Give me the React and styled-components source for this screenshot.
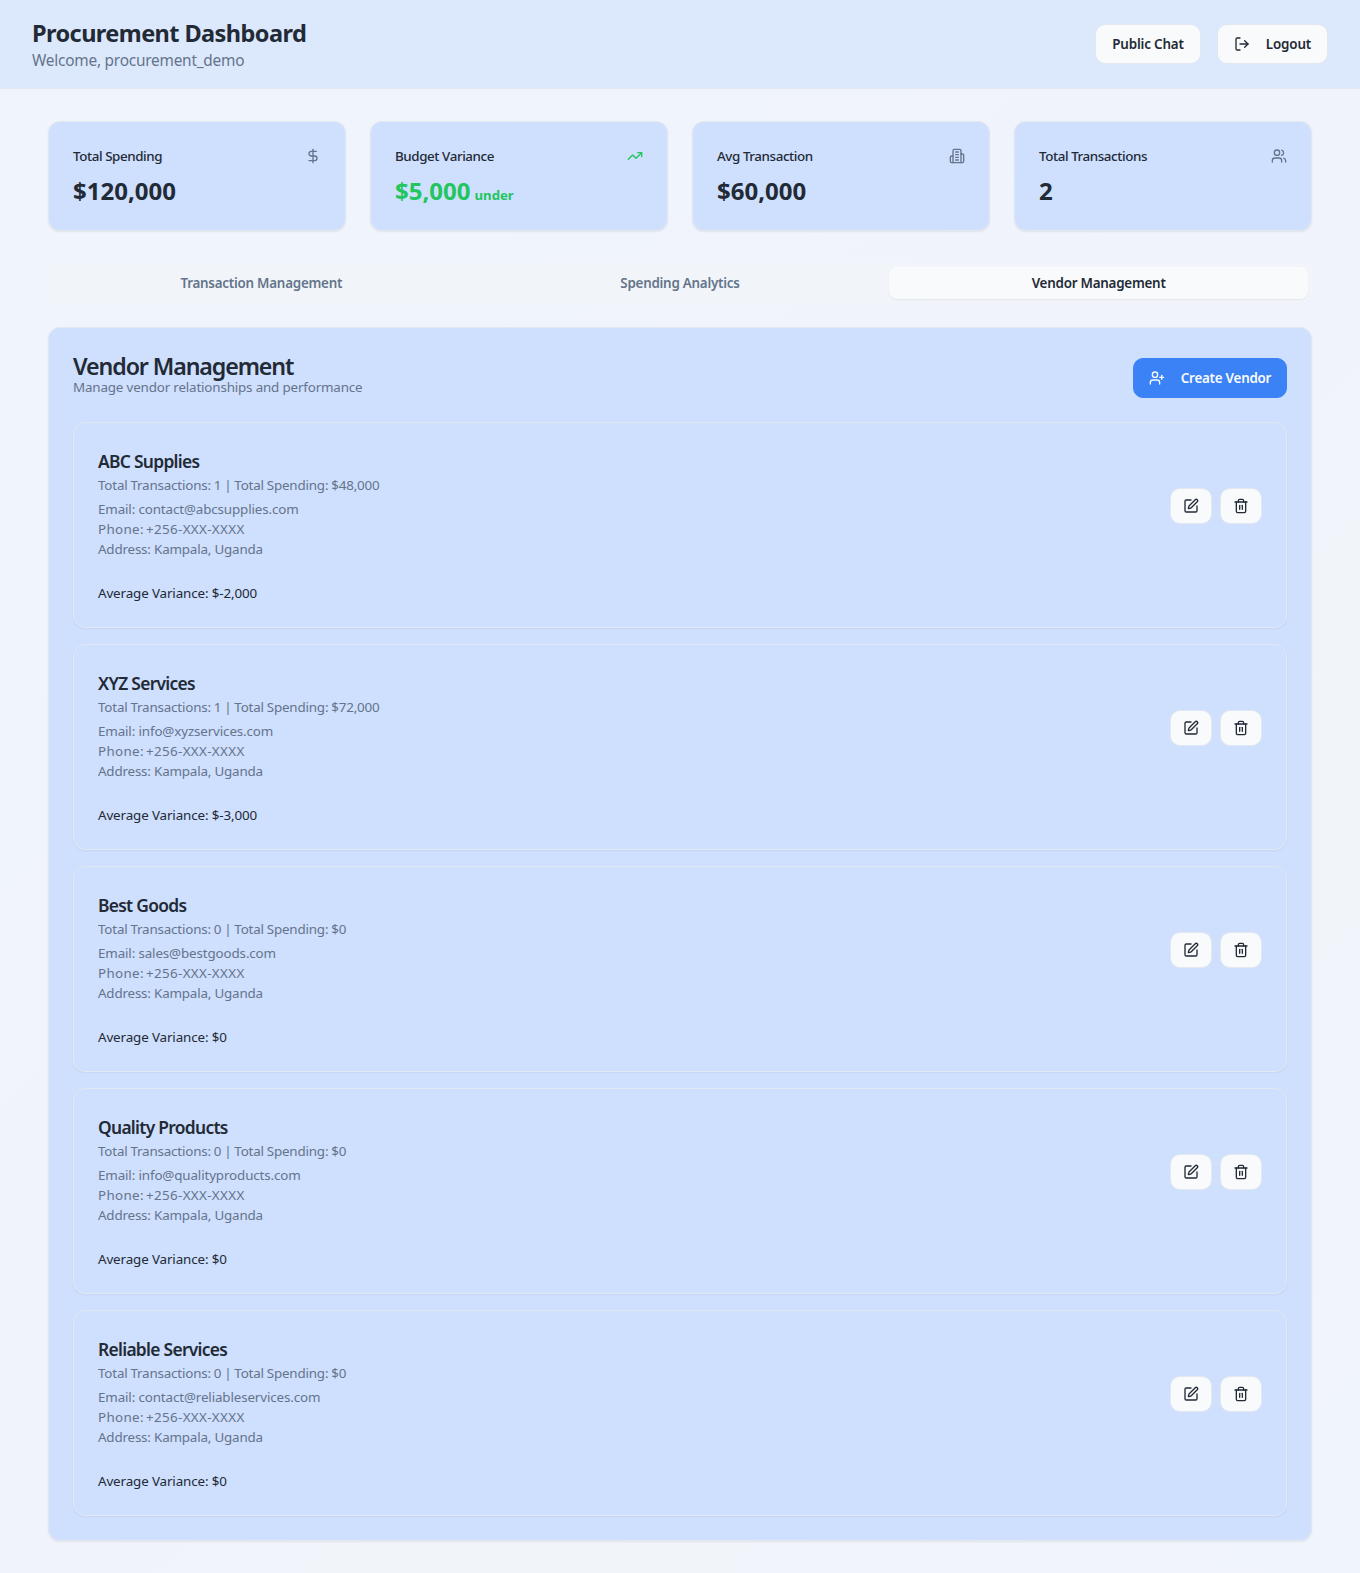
import React from "react";
import styled, { createGlobalStyle } from "styled-components";
import { DollarSign, TrendingUp, Users, UserPlus, LogOut, SquarePen, Trash2 } from "lucide-react";

const color = {
  text: "#222a35",
  muted: "#64748b",
  card: "#cfdffe",
  border: "#e2e8f0",
  surface: "#f9fafc",
  green: "#22c55e",
  primary: "#3b82f6",
};

const GlobalStyle = createGlobalStyle`
  *, *::before, *::after { box-sizing: border-box; }
  body { margin: 0; }
  h1, h2, h3, p { margin: 0; }
  button { font: inherit; margin: 0; cursor: pointer; }
`;

const Page = styled.div`
  min-height: 1573px;
  font-family: "Noto Sans", "Open Sans", sans-serif;
  color: ${color.text};
  background: linear-gradient(135deg, #f0f5fc 0%, #f0f3fc 50%, #f1f4f9 68%, #f0f4fc 100%);
`;

const Header = styled.header`
  display: flex;
  align-items: center;
  justify-content: space-between;
  height: 89px;
  padding: 0 32px;
  background: #dce8fc;
  border-bottom: 1px solid ${color.border};
`;

const Greeting = styled.div`
  padding-top: 2px;
`;

const PageTitle = styled.h1`
  font-size: 23.5px;
  line-height: 32px;
  font-weight: 700;
  letter-spacing: -0.57px;
`;

const Welcome = styled.p`
  font-size: 15.4px;
  line-height: 24px;
  letter-spacing: -0.22px;
  color: ${color.muted};
`;

const HeaderActions = styled.div`
  display: flex;
  gap: 16px;
`;

const Button = styled.button`
  display: inline-flex;
  align-items: center;
  justify-content: center;
  gap: 16px;
  width: ${(p) => p.$width}px;
  height: 40px;
  padding: 0;
  border-radius: 10px;
  border: 1px solid ${(p) => (p.$primary ? color.primary : color.border)};
  background: ${(p) => (p.$primary ? color.primary : color.surface)};
  color: ${(p) => (p.$primary ? "#f8fafc" : color.text)};
  font-size: 13.4px;
  line-height: 20px;
  font-weight: 600;
  letter-spacing: ${(p) => (p.$primary ? -0.24 : -0.15)}px;
  white-space: nowrap;
`;

const Main = styled.main`
  padding: 32px 48px;
`;

const StatGrid = styled.section`
  display: grid;
  grid-template-columns: repeat(4, 1fr);
  gap: 24px;
`;

const StatCard = styled.article`
  height: 110px;
  padding: 24px 24px 0;
  border: 1px solid ${color.border};
  border-radius: 12px;
  background: ${color.card};
  box-shadow: 0 1px 2px rgba(0, 0, 0, 0.07);
`;

const StatHead = styled.div`
  display: flex;
  align-items: center;
  justify-content: space-between;
  padding-bottom: 9px;
  color: ${(p) => (p.$good ? color.green : color.muted)};
`;

const StatLabel = styled.h3`
  font-size: 13.4px;
  line-height: 20px;
  font-weight: 500;
  letter-spacing: -0.42px;
  color: ${color.text};
`;

const StatValue = styled.div`
  font-size: 24px;
  line-height: 32px;
  font-weight: 700;
  color: ${(p) => (p.$good ? color.green : color.text)};
`;

const StatNote = styled.span`
  margin-left: 4px;
  font-size: 13.2px;
  line-height: 20px;
`;

const TabList = styled.nav`
  display: grid;
  grid-template-columns: repeat(3, 1fr);
  margin-top: 32px;
  height: 40px;
  padding: 4px;
  border-radius: 10px;
  background: #f1f5f9;
`;

const Tab = styled.button`
  border: 0;
  padding: 0;
  border-radius: 8px;
  font-size: 13.4px;
  line-height: 20px;
  font-weight: 600;
  letter-spacing: -0.24px;
  color: ${(p) => (p.$active ? color.text : color.muted)};
  background: ${(p) => (p.$active ? color.surface : "transparent")};
  box-shadow: ${(p) => (p.$active ? "0 1px 2px rgba(0, 0, 0, 0.06)" : "none")};
`;

const Panel = styled.section`
  margin-top: 24px;
  padding: 24px;
  border: 1px solid ${color.border};
  border-radius: 12px;
  background: ${color.card};
  box-shadow: 0 1px 2px rgba(0, 0, 0, 0.07);
`;

const PanelHeader = styled.div`
  display: flex;
  align-items: center;
  justify-content: space-between;
  height: 46px;
  margin-bottom: 24px;

  > button {
    margin-top: 6px;
  }
`;

const PanelHeading = styled.div`
  padding: 1px 0;
`;

const PanelTitle = styled.h2`
  font-size: 23.2px;
  line-height: 24px;
  font-weight: 600;
  letter-spacing: -1.1px;
`;

const PanelSubtitle = styled.p`
  font-size: 13.4px;
  line-height: 18px;
  letter-spacing: -0.17px;
  color: ${color.muted};
`;

const VendorList = styled.div`
  display: grid;
  gap: 16px;
`;

const VendorCard = styled.article`
  padding: 24px;
  border: 1px solid ${color.border};
  border-radius: 12px;
  background: ${color.card};
  box-shadow: 0 1px 2px rgba(0, 0, 0, 0.05);
`;

const VendorTop = styled.div`
  display: flex;
  align-items: center;
  justify-content: space-between;
`;

const VendorName = styled.h3`
  font-size: 17.4px;
  line-height: 28px;
  font-weight: 600;
  letter-spacing: -0.7px;
`;

const Summary = styled.p`
  font-size: 13.4px;
  line-height: 20px;
  letter-spacing: -0.18px;
  word-spacing: -0.4px;
  margin-bottom: 4px;
  color: ${color.muted};
`;

const Detail = styled.p`
  font-size: 13.4px;
  line-height: 20px;
  letter-spacing: ${(p) => p.$track}px;
  word-spacing: ${(p) => p.$word || 0}px;
  color: ${color.muted};
`;

const Variance = styled.p`
  margin-top: 24px;
  font-size: 13.4px;
  line-height: 20px;
  letter-spacing: -0.13px;
`;

const VendorActions = styled.div`
  display: flex;
  gap: 8px;
  margin-top: 6px;
`;

const IconButton = styled.button`
  display: flex;
  align-items: center;
  justify-content: center;
  width: 42px;
  height: 36px;
  padding: 0;
  border: 1px solid ${color.border};
  border-radius: 10px;
  background: ${color.surface};
  color: ${color.text};
`;

const Building = ({ size = 16 }) => (
  <svg width={size} height={size} viewBox="0 0 24 24" fill="none" stroke="currentColor" strokeWidth="2" strokeLinecap="round" strokeLinejoin="round">
    <path d="M6 22V4a2 2 0 0 1 2-2h8a2 2 0 0 1 2 2v18Z" />
    <path d="M6 12H4a2 2 0 0 0-2 2v6a2 2 0 0 0 2 2h2" />
    <path d="M18 9h2a2 2 0 0 1 2 2v9a2 2 0 0 1-2 2h-2" />
    <path d="M10 6h4" />
    <path d="M10 10h4" />
    <path d="M10 14h4" />
    <path d="M10 18h4" />
  </svg>
);

const stats = [
  { label: "Total Spending", value: "$120,000", Icon: DollarSign },
  { label: "Budget Variance", value: "$5,000", note: "under", good: true, Icon: TrendingUp },
  { label: "Avg Transaction", value: "$60,000", Icon: Building },
  { label: "Total Transactions", value: "2", Icon: Users },
];

const tabs = ["Transaction Management", "Spending Analytics", "Vendor Management"];

const vendors = [
  { name: "ABC Supplies", count: 1, spending: "48,000", email: "contact@abcsupplies.com", variance: "-2,000" },
  { name: "XYZ Services", count: 1, spending: "72,000", email: "info@xyzservices.com", variance: "-3,000" },
  { name: "Best Goods", count: 0, spending: "0", email: "sales@bestgoods.com", variance: "0" },
  { name: "Quality Products", count: 0, spending: "0", email: "info@qualityproducts.com", variance: "0" },
  { name: "Reliable Services", count: 0, spending: "0", email: "contact@reliableservices.com", variance: "0" },
];

export default function App() {
  return (
    <Page>
      <GlobalStyle />
      <Header>
        <Greeting>
          <PageTitle>Procurement Dashboard</PageTitle>
          <Welcome>Welcome, procurement_demo</Welcome>
        </Greeting>
        <HeaderActions>
          <Button $width={106}>Public Chat</Button>
          <Button $width={111}>
            <LogOut size={16} />
            Logout
          </Button>
        </HeaderActions>
      </Header>
      <Main>
        <StatGrid>
          {stats.map(({ label, value, note, good, Icon }) => (
            <StatCard key={label}>
              <StatHead $good={good}>
                <StatLabel>{label}</StatLabel>
                <Icon size={16} />
              </StatHead>
              <StatValue $good={good}>
                {value}
                {note && <StatNote>{note}</StatNote>}
              </StatValue>
            </StatCard>
          ))}
        </StatGrid>
        <TabList>
          {tabs.map((tab) => (
            <Tab key={tab} $active={tab === "Vendor Management"}>
              {tab}
            </Tab>
          ))}
        </TabList>
        <Panel>
          <PanelHeader>
            <PanelHeading>
              <PanelTitle>Vendor Management</PanelTitle>
              <PanelSubtitle>Manage vendor relationships and performance</PanelSubtitle>
            </PanelHeading>
            <Button $primary $width={154}>
              <UserPlus size={16} />
              Create Vendor
            </Button>
          </PanelHeader>
          <VendorList>
            {vendors.map((v) => (
              <VendorCard key={v.name}>
                <VendorTop>
                  <div>
                    <VendorName>{v.name}</VendorName>
                    <Summary>{`Total Transactions: ${v.count} | Total Spending: $${v.spending}`}</Summary>
                    <Detail $track={-0.14}>{`Email: ${v.email}`}</Detail>
                    <Detail $track={0.33} $word={-1.6}>Phone: +256-XXX-XXXX</Detail>
                    <Detail $track={-0.19}>Address: Kampala, Uganda</Detail>
                  </div>
                  <VendorActions>
                    <IconButton aria-label="Edit vendor">
                      <SquarePen size={16} />
                    </IconButton>
                    <IconButton aria-label="Delete vendor">
                      <Trash2 size={16} />
                    </IconButton>
                  </VendorActions>
                </VendorTop>
                <Variance>{`Average Variance: $${v.variance}`}</Variance>
              </VendorCard>
            ))}
          </VendorList>
        </Panel>
      </Main>
    </Page>
  );
}
